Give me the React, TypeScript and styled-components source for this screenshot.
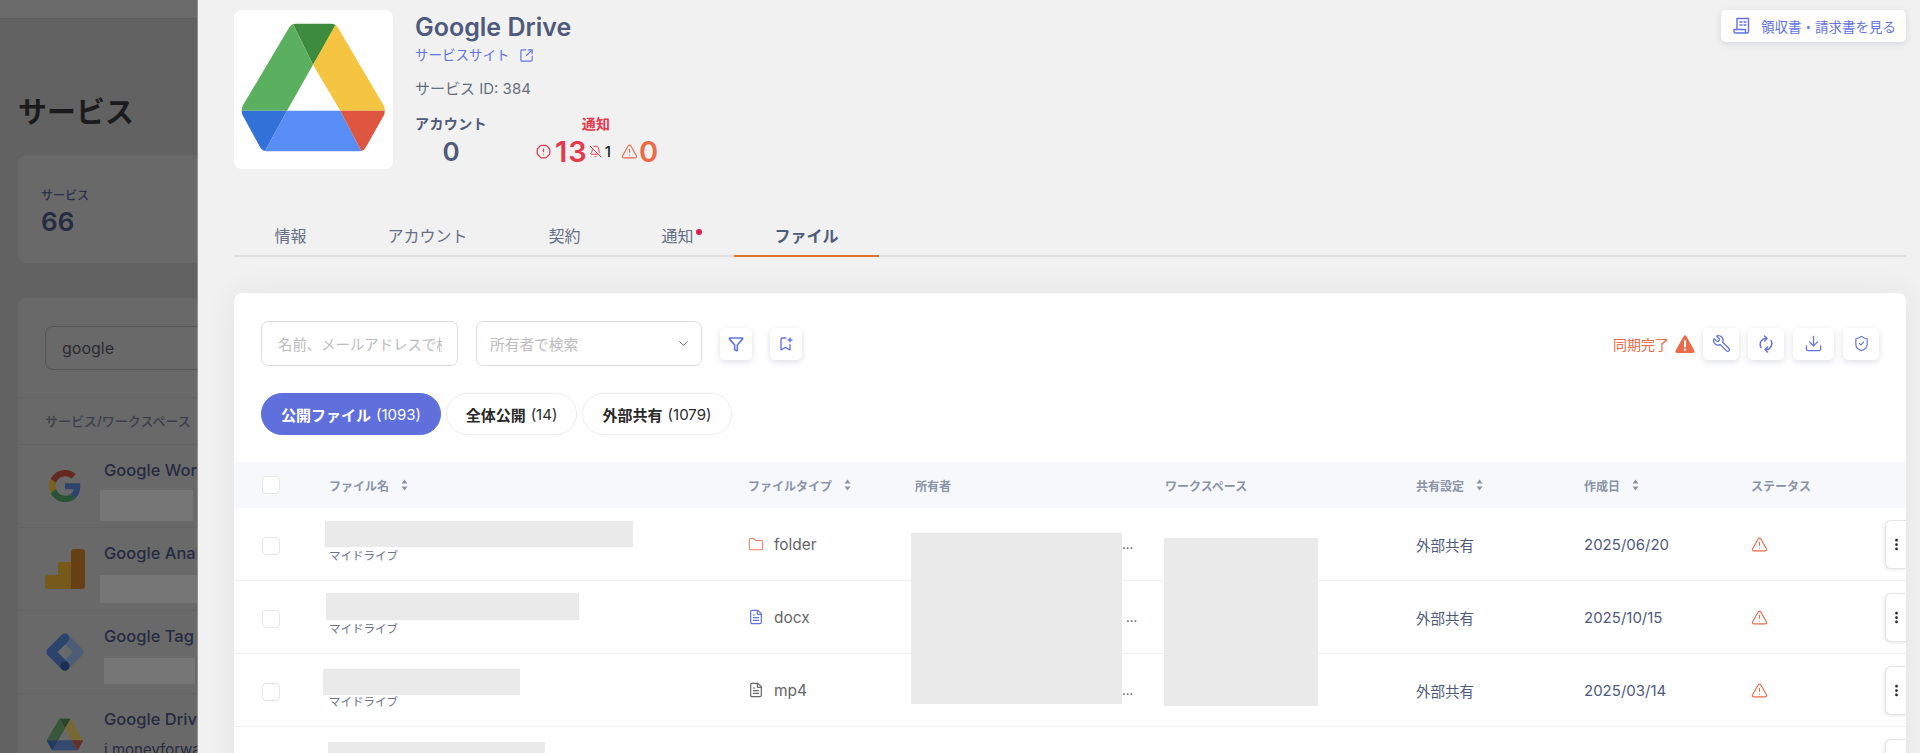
import styled, { createGlobalStyle } from "styled-components";
import {
  BellOff,
  Download,
  EllipsisVertical,
  FileText,
  Folder,
  Funnel,
  OctagonAlert,
  ShieldCheck,
  SquareArrowOutUpRight,
  TriangleAlert,
  Wrench,
  ChevronDown,
} from "lucide-react";

const GlobalStyle = createGlobalStyle`
  html, body {
    margin: 0;
    height: 100%;
    overflow: hidden;
  }
  body {
    font-family: Inter, "Noto Sans CJK JP", sans-serif;
    color: #4e5a7c;
  }
  * {
    box-sizing: border-box;
  }
`;

const ACCENT = "#6272e0";
const ORANGE = "#eb6a49";
const RED = "#e5394b";

const Screen = styled.div`
  position: relative;
  width: 100%;
  height: 100vh;
  overflow: hidden;
  background: #626262;
`;

// page behind the drawer
const TopBar = styled.div`
  height: 19px;
  background: #6b6b6b;
  border-bottom: 1px solid #5d5d5d;
`;

const PageTitle = styled.h1`
  margin: 75px 0 0 18px;
  font-size: 29px;
  line-height: 38px;
  font-weight: 700;
  color: #1b1b1d;
`;

const StatCard = styled.div`
  margin: 23px 0 0 18px;
  height: 108px;
  padding: 33px 23px 0;
  background: #696969;
  border-radius: 8px;
`;

const StatLabel = styled.div`
  font-size: 12px;
  line-height: 16px;
  font-weight: 500;
  color: #2b3049;
`;

const StatValue = styled.div`
  font-size: 26px;
  line-height: 36px;
  font-weight: 600;
  color: #262b42;
`;

const ListCard = styled.div`
  margin: 35px 0 0 18px;
  background: #696969;
  border-radius: 8px 8px 0 0;
`;

const SearchBox = styled.div`
  padding: 28px 0 27px 27px;
  border-bottom: 1px solid #636363;
`;

const BackInput = styled.div`
  width: 500px;
  height: 44px;
  padding-left: 16px;
  border: 1px solid #565656;
  border-radius: 8px;
  font-size: 16px;
  line-height: 42px;
  color: #2c2c30;
`;

const ListHead = styled.div`
  padding: 15px 0 15px 27px;
  border-bottom: 1px solid #636363;
  font-size: 13px;
  line-height: 16px;
  font-weight: 500;
  color: #3c3e4a;
`;

const ServiceRow = styled.div`
  position: relative;
  display: flex;
  align-items: center;
  gap: 19px;
  height: 83px;
  padding-left: 27px;
  border-bottom: 1px solid #636363;
`;

const ServiceIcon = styled.div`
  display: flex;
  align-items: center;
  justify-content: center;
  width: 40px;
  filter: brightness(0.52) saturate(0.7);
`;

const ServiceText = styled.div`
  align-self: flex-start;
  padding-top: 14px;
`;

const ServiceName = styled.div`
  font-size: 16.5px;
  line-height: 22px;
  font-weight: 500;
  color: #262b42;
  white-space: nowrap;
`;

const ServiceSub = styled.div`
  margin-top: 11px;
  font-size: 15px;
  line-height: 18px;
  color: #262b42;
  white-space: nowrap;
`;

// grey masks laid over private values in the shot
const Redact = styled.div<{ $l: number; $t: number; $w: number; $h: number; $dark?: boolean }>`
  position: absolute;
  left: ${(p) => p.$l}px;
  top: ${(p) => p.$t}px;
  width: ${(p) => p.$w}px;
  height: ${(p) => p.$h}px;
  background: ${(p) => (p.$dark ? "#767676" : "#eaeaea")};
`;

// drawer
const Drawer = styled.aside`
  position: absolute;
  top: 0;
  right: 0;
  bottom: 0;
  left: 197px;
  display: flex;
  flex-direction: column;
  padding: 10px 14px 0 36px;
  background: #f1f1f1;
  border-left: 1px solid #8d8d8d;
  overflow: hidden;
`;

const Header = styled.header`
  display: flex;
  align-items: flex-start;
  gap: 22px;
`;

const LogoCard = styled.div`
  display: flex;
  width: 159px;
  height: 159px;
  background: #fff;
  border-radius: 8px;
`;

const Info = styled.div`
  display: flex;
  flex-direction: column;
`;

const Title = styled.h2`
  margin: 0;
  font-size: 25px;
  line-height: 34px;
  font-weight: 600;
  color: #4e5a7c;
`;

const SiteLink = styled.a`
  display: flex;
  align-items: center;
  gap: 9px;
  margin-top: 1px;
  font-size: 13.5px;
  line-height: 20px;
  color: ${ACCENT};
`;

const ServiceId = styled.div`
  margin-top: 14px;
  font-size: 15px;
  line-height: 20px;
  color: #666e7c;
`;

const Stats = styled.div`
  display: flex;
  gap: 49px;
  margin-top: 16px;
`;

const StatCol = styled.div`
  display: flex;
  flex-direction: column;
  align-items: center;
`;

const ColLabel = styled.div<{ $red?: boolean }>`
  margin-right: ${(p) => (p.$red ? "4px" : "0")};
  font-size: 14px;
  line-height: 18px;
  font-weight: 700;
  letter-spacing: 0.4px;
  color: ${(p) => (p.$red ? RED : "#4e5a7c")};
`;

const ColValue = styled.div`
  display: flex;
  align-items: center;
  margin-top: 2px;
  height: 32px;
  font-size: 26px;
  font-weight: 600;
  color: #4e5a7c;
`;

const Count = styled.span<{ $color: string; $left: number }>`
  margin: 0 1px 0 ${(p) => p.$left}px;
  font-size: 29px;
  font-weight: 600;
  letter-spacing: 1px;
  color: ${(p) => p.$color};
`;

const SmallCount = styled.span`
  margin: 0 10px 0 3px;
  font-size: 15px;
  font-weight: 500;
  color: #222;
`;

const ReceiptButton = styled.button`
  display: flex;
  align-items: center;
  gap: 10px;
  margin-left: auto;
  width: 185px;
  height: 32px;
  padding: 0 0 0 12px;
  background: #fff;
  border: 0;
  border-radius: 5px;
  box-shadow: 0 2px 6px rgba(70, 80, 110, 0.16);
  font-family: inherit;
  font-size: 13.5px;
  color: ${ACCENT};
  white-space: nowrap;
`;

const Tabs = styled.nav`
  display: flex;
  margin-top: 48px;
  border-bottom: 2px solid #dedede;
`;

const Tab = styled.div<{ $active?: boolean }>`
  position: relative;
  height: 40px;
  padding: 0 40.5px;
  margin-bottom: -2px;
  border-bottom: 2px solid ${(p) => (p.$active ? "#d9762f" : "transparent")};
  font-size: 16px;
  line-height: 38px;
  font-weight: ${(p) => (p.$active ? 700 : 400)};
  color: ${(p) => (p.$active ? "#4e5a7c" : "#666f85")};
`;

const TabDot = styled.span`
  position: absolute;
  top: 12px;
  right: 32px;
  width: 6px;
  height: 6px;
  border-radius: 50%;
  background: #d81e4a;
`;

const Card = styled.section`
  flex: 1;
  margin-top: 36px;
  padding: 28px 0 0;
  background: #fff;
  border-radius: 8px 8px 0 0;
  box-shadow: 0 0 30px rgba(60, 60, 70, 0.07);
`;

const Toolbar = styled.div`
  display: flex;
  align-items: center;
  gap: 18px;
  padding: 0 27px;
`;

const Field = styled.div<{ $w: number }>`
  display: flex;
  align-items: center;
  justify-content: space-between;
  width: ${(p) => p.$w}px;
  height: 45px;
  padding: 0 10px 0 13px;
  border: 1px solid #dcdcdc;
  border-radius: 7px;
  overflow: hidden;
`;

const Placeholder = styled.span<{ $clip?: boolean }>`
  display: block;
  max-width: ${(p) => (p.$clip ? "167px" : "none")};
  padding-left: ${(p) => (p.$clip ? "3px" : "0")};
  overflow: hidden;
  font-size: ${(p) => (p.$clip ? "14.4px" : "14.7px")};
  white-space: nowrap;
  color: #bcbcbc;
`;

const IconButton = styled.button<{ $w?: number }>`
  display: flex;
  align-items: center;
  justify-content: center;
  width: ${(p) => p.$w ?? 32}px;
  height: 32px;
  padding: 0;
  border: 0;
  border-radius: 5px;
  background: #fff;
  color: ${ACCENT};
  box-shadow: 0 2px 6px rgba(70, 80, 110, 0.18);
`;

const ToolRight = styled.div`
  display: flex;
  align-items: center;
  gap: 9px;
  margin-left: auto;
`;

const SyncState = styled.span`
  display: flex;
  align-items: center;
  gap: 6px;
  margin-right: -1px;
  font-size: 14px;
  color: ${ORANGE};
`;

const Chips = styled.div`
  display: flex;
  gap: 5px;
  margin-top: 27px;
  padding: 0 27px;
`;

const Chip = styled.div<{ $active?: boolean; $w: number }>`
  display: flex;
  align-items: center;
  justify-content: center;
  gap: 5px;
  width: ${(p) => p.$w}px;
  height: 42px;
  border: 1px solid ${(p) => (p.$active ? "#5f70dc" : "#ececec")};
  border-radius: 21px;
  background: ${(p) => (p.$active ? "#5f70dc" : "#fff")};
  color: ${(p) => (p.$active ? "#fff" : "#2a2a2a")};
  font-size: 15px;
  white-space: nowrap;
`;

const ChipName = styled.b`
  font-weight: 700;
`;

const Table = styled.div`
  margin-top: 27px;
`;

const COLUMNS = "95px 419px 167px 250px 251px 168px 167px 100px 1fr";

const HeadRow = styled.div`
  display: grid;
  grid-template-columns: ${COLUMNS};
  align-items: center;
  height: 46px;
  background: #f6f8fc;
`;

const HeadCell = styled.div`
  display: flex;
  align-items: center;
  gap: 12px;
  font-size: 12px;
  font-weight: 700;
  color: #8b93a7;
  white-space: nowrap;
`;

const TableBody = styled.div`
  position: relative;
`;

const Row = styled.div`
  display: grid;
  grid-template-columns: ${COLUMNS};
  align-items: center;
  height: 73px;
  border-bottom: 1px solid #f0f0f0;
`;

const CheckCell = styled.div`
  padding-left: 28px;
`;

const RowCheckCell = styled(CheckCell)`
  padding-top: 3px;
`;

const Checkbox = styled.span`
  display: block;
  width: 18px;
  height: 18px;
  border: 1px solid #e6e6e6;
  border-radius: 4px;
  background: #fff;
`;

const NameCell = styled.div`
  position: relative;
  align-self: stretch;
  padding-top: 40px;
`;

const Folderish = styled.div`
  font-size: 11.5px;
  line-height: 16px;
  color: #6a7285;
`;

const TypeCell = styled.div`
  display: flex;
  align-items: center;
  gap: 10px;
  font-size: 15.5px;
  color: #666;
`;

const TypeIcon = styled.span<{ $color: string }>`
  display: flex;
  justify-content: center;
  width: 16px;
  color: ${(p) => p.$color};
`;

const OwnerCell = styled.div<{ $pad: number }>`
  padding-left: ${(p) => p.$pad}px;
  font-size: 13px;
  line-height: 14px;
  color: #666;
`;

const TextCell = styled.div`
  font-size: 14.5px;
  color: #4e5a7c;
`;

const DateCell = styled(TextCell)`
  font-size: 15px;
`;

const WarnCell = styled.div`
  display: flex;
  color: ${ORANGE};
`;

const MoreCell = styled.div`
  display: flex;
  justify-content: flex-end;
`;

const MoreButton = styled.button`
  display: flex;
  align-items: center;
  justify-content: center;
  width: 21px;
  height: 49px;
  padding: 0;
  background: #fff;
  border: 1px solid #e4e4e4;
  border-right: 0;
  border-radius: 6px 0 0 6px;
  box-shadow: -1px 1px 3px rgba(70, 80, 110, 0.12);
  color: #222;
`;

const FlippedWrench = styled(Wrench)`
  transform: scaleX(-1);
`;

const DRIVE_CLIP =
  "M62 13.7H97Q101.7 13.7 104 17.8L150 96Q151.6 100.7 150 105L132 137Q129.5 141.3 125 141.3H33Q28.5 141.3 26 137L8.5 105Q6.8 100.7 8.5 96L55 17.8Q57.3 13.7 62 13.7Z";

const DriveLogo = ({ id, size }: { id: string; size: number }) => (
  <svg width={size} height={size} viewBox="0 0 159 159">
    <clipPath id={id}>
      <path d={DRIVE_CLIP} />
    </clipPath>
    <g clipPath={`url(#${id})`}>
      <polygon points="57,10 106,10 79,54.7" fill="#3d8b3f" />
      <polygon points="57,10 79,54.7 53,100.7 4,100.7" fill="#5bb05f" />
      <polygon points="104,10 155,100.7 106.3,100.7 79,54.7" fill="#f5c542" />
      <polygon points="4,100.7 53,100.7 30,143 26,143" fill="#3272d8" />
      <polygon points="53,100.7 106.3,100.7 128.3,143 30,143" fill="#588df5" />
      <polygon points="106.3,100.7 155,100.7 132,143 128.3,143" fill="#de5540" />
    </g>
  </svg>
);

const GoogleG = () => (
  <svg width="32" height="32" viewBox="0 0 48 48">
    <path fill="#EA4335" d="M24 9.5c3.54 0 6.71 1.22 9.21 3.6l6.85-6.85C35.9 2.38 30.47 0 24 0 14.62 0 6.51 5.38 2.56 13.22l7.98 6.19C12.43 13.72 17.74 9.5 24 9.5z" />
    <path fill="#4285F4" d="M46.98 24.55c0-1.57-.15-3.09-.38-4.55H24v9.02h12.94c-.58 2.96-2.26 5.48-4.78 7.18l7.73 6c4.51-4.18 7.09-10.36 7.09-17.65z" />
    <path fill="#FBBC05" d="M10.53 28.59c-.48-1.45-.76-2.99-.76-4.59s.27-3.14.76-4.59l-7.98-6.19C.92 16.46 0 20.12 0 24c0 3.88.92 7.54 2.56 10.78l7.97-6.19z" />
    <path fill="#34A853" d="M24 48c6.48 0 11.93-2.13 15.89-5.81l-7.73-6c-2.15 1.45-4.92 2.3-8.16 2.3-6.26 0-11.57-4.22-13.47-9.91l-7.98 6.19C6.51 42.62 14.62 48 24 48z" />
  </svg>
);

const AnalyticsLogo = () => (
  <svg width="40" height="40" viewBox="0 0 40 40">
    <rect x="0" y="26" width="16" height="14" rx="3" fill="#f9ab00" />
    <rect x="13" y="13" width="14" height="27" fill="#f9ab00" />
    <path d="M26 3a3 3 0 0 1 3-3h8a3 3 0 0 1 3 3v34a3 3 0 0 1-3 3H26z" fill="#e37400" />
  </svg>
);

const TagLogo = () => (
  <svg width="38" height="38" viewBox="0 0 38 38">
    <path d="M19 5L33 19L19 33L5 19Z" fill="none" stroke="#8ab4f8" strokeWidth="9" strokeLinejoin="round" />
    <path d="M19 5L5 19L19 33" fill="none" stroke="#4285f4" strokeWidth="9" strokeLinecap="round" strokeLinejoin="round" />
    <circle cx="19" cy="33" r="4.6" fill="#2a56c6" />
  </svg>
);

const SortIcon = () => (
  <svg width="7" height="12" viewBox="0 0 7 12" fill="#8b93a7">
    <path d="M3.5 0.5L6.5 4.5H0.5Z" />
    <path d="M3.5 11.5L0.5 7.5H6.5Z" />
  </svg>
);

const ReceiptIcon = () => (
  <svg width="18" height="18" viewBox="0 0 18 18" fill="none" stroke="currentColor" strokeWidth="1.4" strokeLinecap="round" strokeLinejoin="round">
    <path d="M4 12.5V1.5h11.5v13a1.5 1.5 0 0 1-3 0v-2H1v2A1.5 1.5 0 0 0 2.5 16h11.5" />
    <path d="M7 5h2M11 5h2M7 8h2M11 8h2" />
  </svg>
);

const BookmarkIcon = () => (
  <svg width="16" height="16" viewBox="0 0 24 24" fill="none" stroke="currentColor" strokeWidth="2" strokeLinecap="round" strokeLinejoin="round">
    <path d="M12 3H6a1.5 1.5 0 0 0-1.500 1.500V21l6.500-4 7 4v-8" />
    <path d="M18 3v6M15 6h6" />
  </svg>
);

const SyncIcon = () => (
  <svg width="14" height="18" viewBox="0 0 14 18" fill="none" stroke="currentColor" strokeWidth="1.5" strokeLinecap="round" strokeLinejoin="round">
    <path d="M2 12.5A5.500 6 0 0 1 7.500 3.500" />
    <path d="M5.500 1L8 3.500L5.500 6" />
    <path d="M12 5.500A5.500 6 0 0 1 6.500 14.500" />
    <path d="M8.500 12L6 14.500L8.500 17" />
  </svg>
);

const WarningSolid = () => (
  <svg width="20" height="18" viewBox="0 0 20 18">
    <path d="M8.600 1.200a1.600 1.600 0 0 1 2.800 0l8 14.300a1.600 1.600 0 0 1-1.400 2.400H2a1.600 1.600 0 0 1-1.400-2.400z" fill={ORANGE} />
    <path d="M10 6v5.500" stroke="#fff" strokeWidth="2" strokeLinecap="round" />
    <circle cx="10" cy="14.600" r="1.200" fill="#fff" />
  </svg>
);

const services = [
  { name: "Google Workspace", icon: <GoogleG />, mask: { l: 73, t: 45, w: 93, h: 31 } },
  { name: "Google Analytics", icon: <AnalyticsLogo />, mask: { l: 73, t: 47, w: 99, h: 28 } },
  { name: "Google Tag Manager", icon: <TagLogo />, mask: { l: 77, t: 47, w: 91, h: 26 } },
];

const files = [
  { type: "folder", icon: <Folder size={17} strokeWidth={1.6} />, color: "#f07f62", date: "2025/06/20", pad: 207, mask: { l: -4, t: 13, w: 308, h: 26 } },
  { type: "docx", icon: <FileText size={16} strokeWidth={1.8} />, color: ACCENT, date: "2025/10/15", pad: 211, mask: { l: -3, t: 12, w: 253, h: 27 } },
  { type: "mp4", icon: <FileText size={16} strokeWidth={1.8} />, color: "#666", date: "2025/03/14", pad: 207, mask: { l: -6, t: 15, w: 197, h: 26 } },
  { type: "pdf", icon: <FileText size={16} strokeWidth={1.8} />, color: ACCENT, date: "2025/03/14", pad: 207, mask: { l: -1, t: 15, w: 217, h: 26 } },
];

export default function App() {
  return (
    <Screen>
      <GlobalStyle />
      <TopBar />
      <PageTitle>サービス</PageTitle>
      <StatCard>
        <StatLabel>サービス</StatLabel>
        <StatValue>66</StatValue>
      </StatCard>
      <ListCard>
        <SearchBox>
          <BackInput>google</BackInput>
        </SearchBox>
        <ListHead>サービス/ワークスペース</ListHead>
        {services.map((s) => (
          <ServiceRow key={s.name}>
            <ServiceIcon>{s.icon}</ServiceIcon>
            <ServiceText>
              <ServiceName>{s.name}</ServiceName>
            </ServiceText>
            <Redact $dark $l={s.mask.l + 9} $t={s.mask.t} $w={s.mask.w} $h={s.mask.h} />
          </ServiceRow>
        ))}
        <ServiceRow>
          <ServiceIcon>
            <DriveLogo id="drive-small" size={42} />
          </ServiceIcon>
          <ServiceText>
            <ServiceName>Google Drive</ServiceName>
            <ServiceSub>j.moneyforward.com</ServiceSub>
          </ServiceText>
        </ServiceRow>
      </ListCard>

      <Drawer>
        <Header>
          <LogoCard>
            <DriveLogo id="drive-large" size={159} />
          </LogoCard>
          <Info>
            <Title>Google Drive</Title>
            <SiteLink>
              サービスサイト
              <SquareArrowOutUpRight size={15} strokeWidth={1.8} />
            </SiteLink>
            <ServiceId>サービス ID: 384</ServiceId>
            <Stats>
              <StatCol>
                <ColLabel>アカウント</ColLabel>
                <ColValue>0</ColValue>
              </StatCol>
              <StatCol>
                <ColLabel $red>通知</ColLabel>
                <ColValue>
                  <OctagonAlert size={15} color={RED} strokeWidth={2} />
                  <Count $color={RED} $left={4}>13</Count>
                  <BellOff size={13} color={RED} strokeWidth={1.8} />
                  <SmallCount>1</SmallCount>
                  <TriangleAlert size={17} color={ORANGE} strokeWidth={1.6} />
                  <Count $color={ORANGE} $left={1}>0</Count>
                </ColValue>
              </StatCol>
            </Stats>
          </Info>
          <ReceiptButton>
            <ReceiptIcon />
            領収書・請求書を見る
          </ReceiptButton>
        </Header>

        <Tabs>
          <Tab>情報</Tab>
          <Tab>アカウント</Tab>
          <Tab>契約</Tab>
          <Tab>
            通知
            <TabDot />
          </Tab>
          <Tab $active>ファイル</Tab>
        </Tabs>

        <Card>
          <Toolbar>
            <Field $w={197}>
              <Placeholder $clip>名前、メールアドレスで検索</Placeholder>
            </Field>
            <Field $w={226}>
              <Placeholder>所有者で検索</Placeholder>
              <ChevronDown size={15} color="#666" strokeWidth={1.6} />
            </Field>
            <IconButton>
              <Funnel size={16} strokeWidth={2.4} />
            </IconButton>
            <IconButton>
              <BookmarkIcon />
            </IconButton>
            <ToolRight>
              <SyncState>
                同期完了
                <WarningSolid />
              </SyncState>
              <IconButton $w={36}>
                <FlippedWrench size={19} strokeWidth={1.6} />
              </IconButton>
              <IconButton $w={36}>
                <SyncIcon />
              </IconButton>
              <IconButton $w={41}>
                <Download size={19} strokeWidth={1.6} />
              </IconButton>
              <IconButton $w={36}>
                <ShieldCheck size={17} strokeWidth={1.6} />
              </IconButton>
            </ToolRight>
          </Toolbar>

          <Chips>
            <Chip $active $w={180}>
              <ChipName>公開ファイル</ChipName> (1093)
            </Chip>
            <Chip $w={131}>
              <ChipName>全体公開</ChipName> (14)
            </Chip>
            <Chip $w={150}>
              <ChipName>外部共有</ChipName> (1079)
            </Chip>
          </Chips>

          <Table>
            <HeadRow>
              <CheckCell>
                <Checkbox />
              </CheckCell>
              <HeadCell>
                ファイル名
                <SortIcon />
              </HeadCell>
              <HeadCell>
                ファイルタイプ
                <SortIcon />
              </HeadCell>
              <HeadCell>所有者</HeadCell>
              <HeadCell>ワークスペース</HeadCell>
              <HeadCell>
                共有設定
                <SortIcon />
              </HeadCell>
              <HeadCell>
                作成日
                <SortIcon />
              </HeadCell>
              <HeadCell>ステータス</HeadCell>
            </HeadRow>
            <TableBody>
              {files.map((f) => (
                <Row key={f.type}>
                  <RowCheckCell>
                    <Checkbox />
                  </RowCheckCell>
                  <NameCell>
                    <Redact $l={f.mask.l} $t={f.mask.t} $w={f.mask.w} $h={f.mask.h} />
                    <Folderish>マイドライブ</Folderish>
                  </NameCell>
                  <TypeCell>
                    <TypeIcon $color={f.color}>{f.icon}</TypeIcon>
                    {f.type}
                  </TypeCell>
                  <OwnerCell $pad={f.pad}>…</OwnerCell>
                  <div />
                  <TextCell>外部共有</TextCell>
                  <DateCell>{f.date}</DateCell>
                  <WarnCell>
                    <TriangleAlert size={17} strokeWidth={1.6} />
                  </WarnCell>
                  <MoreCell>
                    <MoreButton>
                      <EllipsisVertical size={15} strokeWidth={2.4} />
                    </MoreButton>
                  </MoreCell>
                </Row>
              ))}
              <Redact $l={677} $t={25} $w={211} $h={171} />
              <Redact $l={930} $t={30} $w={154} $h={168} />
            </TableBody>
          </Table>
        </Card>
      </Drawer>
    </Screen>
  );
}
